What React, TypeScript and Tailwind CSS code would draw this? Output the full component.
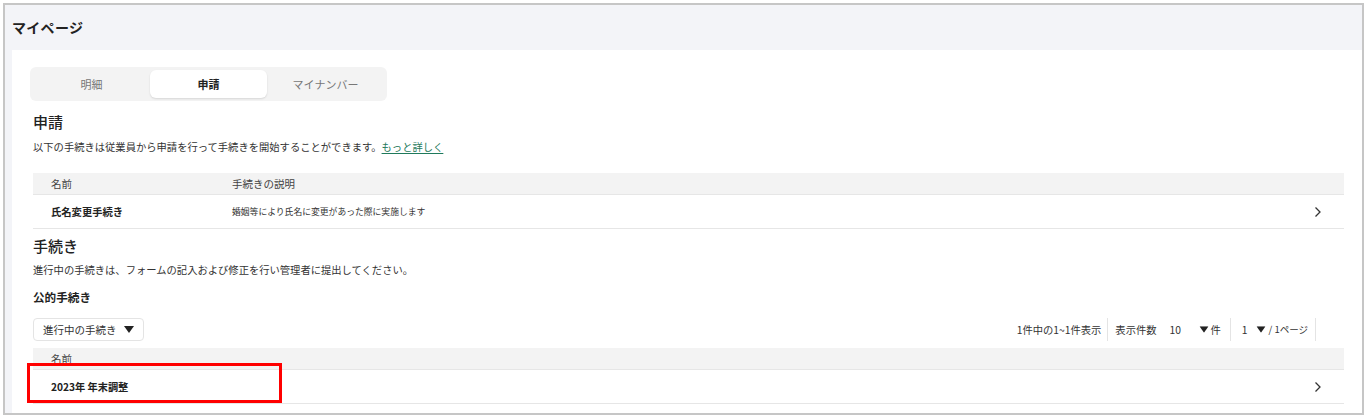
import React from 'react';

const jp = { fontFamily: '"Noto Sans CJK JP", "Noto Sans", sans-serif' };

function Chevron() {
  return (
    <svg width="8" height="12" viewBox="0 0 8 12" className="text-[#333]">
      <polyline points="1.5,1.5 6,6 1.5,10.5" fill="none" stroke="currentColor" strokeWidth="1.3" />
    </svg>
  );
}

function Caret({ className = '' }: { className?: string }) {
  return (
    <svg width="10" height="7" viewBox="0 0 10 7" className={className}>
      <polygon points="0,0 10,0 5,7" fill="#222" />
    </svg>
  );
}

const tabs = ['明細', '申請', 'マイナンバー'];

export default function App() {
  const active = '申請';

  return (
    <div className="w-[1367px] h-[418px] bg-white pt-[3px] pl-[3px]" style={jp}>
      <div className="w-[1361px] h-[412px] border-2 border-[#c6c6c6] bg-[#f3f4f8] flex flex-col">
        <div className="h-[45px] shrink-0 flex items-center pl-[7px]">
          <h1 className="text-[14px] font-bold text-[#222] tracking-[0.3px]">マイページ</h1>
        </div>

        <div className="flex-1 ml-[7px] bg-white pl-[18px] pr-[18px] pt-[17px] relative">
          {/* tabs */}
          <div className="w-[357px] h-[34px] rounded-md bg-[#f3f3f3] p-[3px] grid grid-cols-3">
            {tabs.map((t) => (
              <div
                key={t}
                className={
                  t === active
                    ? 'flex items-center justify-center rounded-md bg-white shadow-[0_1px_2px_rgba(0,0,0,0.12)] text-[11px] font-bold text-[#222]'
                    : 'flex items-center justify-center text-[11px] text-[#777]'
                }
              >
                {t}
              </div>
            ))}
          </div>

          <div className="ml-[3px]">
            {/* 申請 */}
            <h2 className="mt-[10px] text-[15px] leading-[22px] font-medium text-[#222]">申請</h2>
            <p className="mt-[6px] text-[10.3px] leading-[16px] text-[#333]">
              以下の手続きは従業員から申請を行って手続きを開始することができます。
              <span className="text-[#1f7a5c] underline underline-offset-2">もっと詳しく</span>
            </p>

            <div className="mt-[18px]">
              <div className="h-[22px] bg-[#f3f3f3] flex items-center text-[10.5px] text-[#444] border-b border-[#e6e6e6]">
                <span className="w-[199px] pl-[18px]">名前</span>
                <span>手続きの説明</span>
              </div>
              <div className="h-[34px] flex items-center border-b border-[#e6e6e6]">
                <span className="w-[199px] pl-[18px] text-[10.3px] font-bold text-[#222]">氏名変更手続き</span>
                <span className="flex-1 text-[8.8px] text-[#333]">婚姻等により氏名に変更があった際に実施します</span>
                <span className="pr-[22px] flex items-center"><Chevron /></span>
              </div>
            </div>

            {/* 手続き */}
            <h2 className="mt-[6px] text-[15px] leading-[22px] font-medium text-[#222]">手続き</h2>
            <p className="mt-[5px] text-[10.3px] leading-[16px] text-[#333]">
              進行中の手続きは、フォームの記入および修正を行い管理者に提出してください。
            </p>
            <h3 className="mt-[10px] text-[11.6px] leading-[18px] font-bold text-[#222]">公的手続き</h3>

            <div className="mt-[12px] flex items-center justify-between h-[23px]">
              <button className="h-[23px] w-[111px] rounded border border-[#e4e4e4] flex items-center pl-[9px] gap-[7px] text-[10.5px] text-[#333]">
                進行中の手続き
                <Caret />
              </button>
              <div className="flex items-center h-[23px] text-[10.3px] text-[#333] pr-[28px]">
                <span className="pr-[6px]">1件中の1~1件表示</span>
                <span className="h-full border-l border-[#e4e4e4]" />
                <span className="pl-[7px]">表示件数</span>
                <span className="pl-[13px] w-[42px]">10</span>
                <Caret className="scale-90" />
                <span className="pl-[2px] pr-[9px]">件</span>
                <span className="h-full border-l border-[#e4e4e4]" />
                <span className="pl-[11px] pr-[8px]">1</span>
                <Caret className="scale-90" />
                <span className="pl-[3px] pr-[7px] text-[9.5px]">/ 1ページ</span>
                <span className="h-full border-l border-[#e4e4e4]" />
              </div>
            </div>

            <div className="mt-[7px]">
              <div className="h-[22px] bg-[#f3f3f3] flex items-center text-[10.5px] text-[#444] border-b border-[#e6e6e6]">
                <span className="pl-[18px]">名前</span>
              </div>
              <div className="h-[34px] flex items-center border-b border-[#e6e6e6]">
                <span className="flex-1 pl-[18px] text-[10.2px] font-bold text-[#222]">2023年 年末調整</span>
                <span className="pr-[22px] flex items-center"><Chevron /></span>
              </div>
            </div>
          </div>

          {/* annotation highlight */}
          <div className="absolute left-[15px] top-[313px] w-[255px] h-[40px] border-[3px] border-[#ff0000]" />
        </div>
      </div>
    </div>
  );
}
